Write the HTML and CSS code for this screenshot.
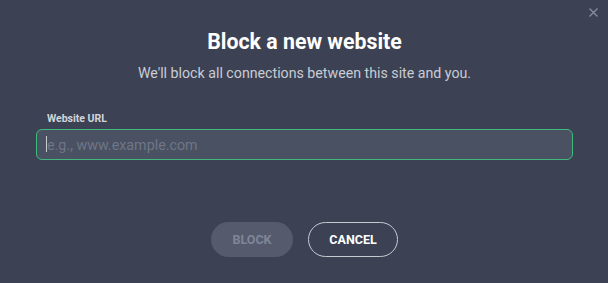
FILE: index.html
```html
<!DOCTYPE html>
<html>
<head>
<meta charset="utf-8">
<link rel="stylesheet" href="styles.css">
</head>
<body>
<div class="dialog">
  <button class="close" aria-label="Close">
    <svg width="9" height="9" viewBox="0 0 9 9"><path d="M0.5 0.5L8.5 8.5M8.5 0.5L0.5 8.5" stroke="#8a90a0" stroke-width="1.2" fill="none"/></svg>
  </button>
  <h1 class="title">Block a new website</h1>
  <p class="subtitle">We'll block all connections between this site and you.</p>
  <label class="label" for="url">Website URL</label>
  <div class="field">
    <span class="caret"></span>
    <input id="url" class="input" type="text" placeholder="e.g., www.example.com">
  </div>
  <div class="actions">
    <button class="btn btn-block">BLOCK</button>
    <button class="btn btn-cancel">CANCEL</button>
  </div>
</div>
</body>
</html>
```
FILE: styles.css
```css
html, body {
  margin: 0;
  padding: 0;
  background: #3c4253;
}
.dialog {
  position: relative;
  width: 608px;
  height: 283px;
  box-sizing: border-box;
  padding: 30px 35px 0 36px;
  display: flex;
  flex-direction: column;
  font-family: Roboto, "Liberation Sans", sans-serif;
}
.close {
  position: absolute;
  top: 8px;
  right: 10px;
  width: 9px;
  height: 9px;
  padding: 0;
  border: 0;
  background: none;
  display: flex;
}
.title {
  margin: 0;
  font-size: 21.3px;
  line-height: 24px;
  font-weight: 700;
  color: #ffffff;
  text-align: center;
}
.subtitle {
  margin: 11px 0 0;
  font-size: 14.2px;
  line-height: 16px;
  color: #c9ccd3;
  text-align: center;
}
.label {
  margin: 32px 0 0 11px;
  font-size: 10.5px;
  line-height: 12px;
  font-weight: 700;
  color: #d3d5db;
}
.field {
  position: relative;
  margin-top: 4px;
  height: 31px;
  box-sizing: border-box;
  border: 1.5px solid #3fba7c;
  border-radius: 6px;
  background: #4a5162;
  display: flex;
  align-items: center;
}
.caret {
  position: absolute;
  left: 9px;
  top: 6px;
  width: 1px;
  height: 16px;
  background: #c8ccd4;
}
.input {
  flex: 1;
  height: 100%;
  border: 0;
  background: transparent;
  padding: 0 0 0 10px;
  font-family: Roboto, "Liberation Sans", sans-serif;
  font-size: 14.3px;
  color: #ffffff;
  outline: none;
}
.input::placeholder {
  color: #6f7686;
}
.actions {
  margin-top: 62px;
  display: flex;
  justify-content: center;
  gap: 15px;
}
.btn {
  height: 35px;
  border-radius: 18px;
  font-family: Roboto, "Liberation Sans", sans-serif;
  font-size: 12.5px;
  font-weight: 700;
  padding: 0;
}
.btn-block {
  width: 82px;
  border: 0;
  background: #555b6c;
  color: #80869a;
}
.btn-cancel {
  width: 90px;
  border: 1.5px solid #c8cad1;
  background: transparent;
  color: #ffffff;
}
```
